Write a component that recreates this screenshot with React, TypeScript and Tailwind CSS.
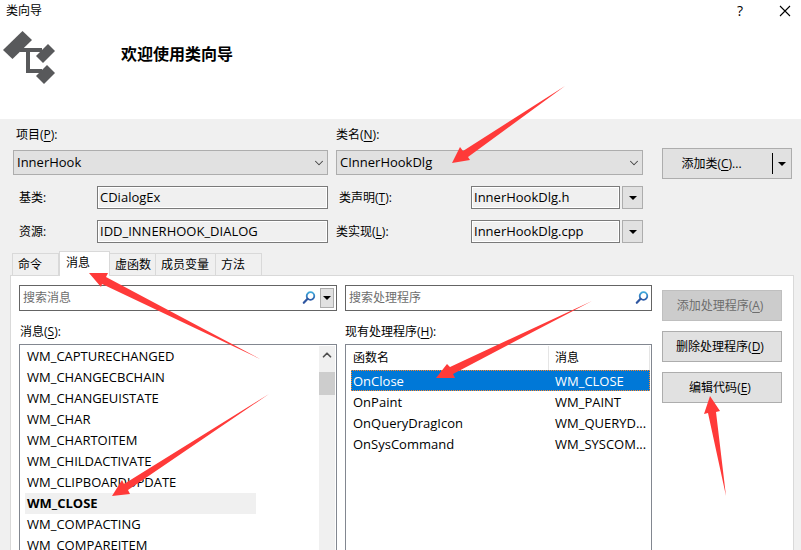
import React from "react";
import clsx from "clsx";
import { ChevronDown, ChevronUp } from "lucide-react";

const messages = [
    "WM_CAPTURECHANGED",
    "WM_CHANGECBCHAIN",
    "WM_CHANGEUISTATE",
    "WM_CHAR",
    "WM_CHARTOITEM",
    "WM_CHILDACTIVATE",
    "WM_CLIPBOARDUPDATE",
    "WM_CLOSE",
    "WM_COMPACTING",
    "WM_COMPAREITEM",
];

const handlers = [
    { name: "OnClose", message: "WM_CLOSE" },
    { name: "OnPaint", message: "WM_PAINT" },
    { name: "OnQueryDragIcon", message: "WM_QUERYD..." },
    { name: "OnSysCommand", message: "WM_SYSCOM..." },
];

const tabs = [
    { label: "命令", width: "w-[47px]" },
    { label: "消息", width: "w-[51px]" },
    { label: "虚函数", width: "w-[46px]" },
    { label: "成员变量", width: "w-[60px]" },
    { label: "方法", width: "w-[46px]" },
];

const marks = [
    "452,163 460,147 463,151 565,86 468,157 470,160",
    "89,273 108,273 106,277 260,359 102,284 101,287",
    "112,496 122,480 124,484 269,394 128,490 130,494",
    "436,378 447,364 450,367 592,301 453,374 455,378",
    "710,396 720,411 716,412 726,496 708,413 704,414",
];

// text with an underlined access key, e.g. 项目(P):
const KeyText = ({ text, accessKey, end = "" }: { text: string; accessKey: string; end?: string }) => (
    <>
        {text}(<span className="underline underline-offset-2">{accessKey}</span>){end}
    </>
);

const Triangle = () => (
    <svg width="8" height="4" viewBox="0 0 8 4" aria-hidden="true">
        <path d="M0 0h8L4 4z" fill="#000" />
    </svg>
);

const SearchIcon = ({ id }: { id: string }) => (
    <svg className="shrink-0" width="14" height="14" viewBox="0 0 14 14" fill="none" aria-hidden="true">
        <defs>
            <linearGradient id={id} x1="0" y1="0" x2="0" y2="1">
                <stop offset="0" stopColor="#3fa9dc" />
                <stop offset="1" stopColor="#2b5aa8" />
            </linearGradient>
        </defs>
        <circle cx="8.5" cy="5" r="3.8" stroke={`url(#${id})`} strokeWidth="1.8" />
        <path d="M5.6 7.8L1.8 11.800" stroke="#2f56a0" strokeWidth="2.2" strokeLinecap="round" />
    </svg>
);

const Combo = ({ id, value }: { id: string; value: string }) => (
    <div className="relative">
        <select
            id={id}
            className="block h-[25px] w-full appearance-none border border-[#adadad] bg-[#e1e1e1] px-[3px] pb-[2px] text-[13px]"
        >
            <option>{value}</option>
        </select>
        <ChevronDown
            size={14}
            strokeWidth={1.8}
            className="pointer-events-none absolute right-[2px] top-[6px] text-[#444]"
        />
    </div>
);

const ReadOnly = ({ id, value }: { id: string; value: string }) => (
    <input
        id={id}
        readOnly
        value={value}
        className="h-[23px] w-full min-w-0 flex-1 border border-[#7a7a7a] bg-[#f0f0f0] px-[2px] pb-[2px] text-[13px] outline outline-1 -outline-offset-2 outline-white"
    />
);

const DropButton = ({ label }: { label: string }) => (
    <button
        aria-label={label}
        className="flex h-[23px] w-[21px] shrink-0 items-center justify-center border border-[#adadad] bg-[#e1e1e1]"
    >
        <Triangle />
    </button>
);

const App = () => {
    return (
        <div className="relative flex h-screen flex-col overflow-hidden bg-[#f0f0f0] font-['Open_Sans','Noto_Sans_CJK_SC',sans-serif] text-xs leading-4 text-black">
            {/* title bar and banner */}
            <header className="h-[119px] shrink-0 bg-white">
                <div className="flex h-[22px] items-center justify-between pl-[6px] pr-[10px]">
                    <span>类向导</span>
                    <div className="flex items-center gap-[31px]">
                        <button aria-label="帮助" className="w-4 text-sm font-medium leading-4">
                            ?
                        </button>
                        <button aria-label="关闭">
                            <svg width="12" height="12" viewBox="0 0 12 12" stroke="#000" strokeWidth="1.1">
                                <path d="M1 1l10 10M11 1L1 11" />
                            </svg>
                        </button>
                    </div>
                </div>
                <div className="flex items-start gap-16 pl-[3px] pt-2">
                    <svg width="54" height="56" viewBox="3 30 54 56" fill="#58595b" aria-hidden="true">
                        <path d="M3 50L22.500 31 32 40 12.500 59z" />
                        <path d="M48 44l7 7-12 12-7-7z" />
                        <path d="M47 65l8 8-11 11-8-8z" />
                        <path d="M20 48h22v4H30v17h12v4H26V52h-6z" />
                    </svg>
                    <h1 className="pt-3 text-base font-bold leading-6">欢迎使用类向导</h1>
                </div>
            </header>

            {/* class fields */}
            <section className="flex shrink-0 gap-[19px] pl-[13px] pr-[9px] pt-[7px]">
                <div className="grid flex-1 grid-cols-[315fr_307fr] gap-x-2">
                    <div>
                        <label htmlFor="project" className="block h-6 pl-[3px] leading-[18px]">
                            <KeyText text="项目" accessKey="P" end=":" />
                        </label>
                        <Combo id="project" value="InnerHook" />
                        <div className="mt-[11px] flex items-center">
                            <label htmlFor="base" className="w-[84px] pl-[6px]">
                                基类:
                            </label>
                            <ReadOnly id="base" value="CDialogEx" />
                        </div>
                        <div className="mt-[11px] flex items-center">
                            <label htmlFor="resource" className="w-[84px] pl-[6px]">
                                资源:
                            </label>
                            <ReadOnly id="resource" value="IDD_INNERHOOK_DIALOG" />
                        </div>
                    </div>
                    <div>
                        <label htmlFor="class-name" className="block h-6 leading-[18px]">
                            <KeyText text="类名" accessKey="N" end=":" />
                        </label>
                        <Combo id="class-name" value="CInnerHookDlg" />
                        <div className="mt-[11px] flex items-center">
                            <label htmlFor="decl" className="w-[135px] pl-[3px]">
                                <KeyText text="类声明" accessKey="T" end=":" />
                            </label>
                            <ReadOnly id="decl" value="InnerHookDlg.h" />
                            <div className="w-[2px]" />
                            <DropButton label="打开类声明" />
                        </div>
                        <div className="mt-[11px] flex items-center">
                            <label htmlFor="impl" className="w-[135px]">
                                <KeyText text="类实现" accessKey="L" end=":" />
                            </label>
                            <ReadOnly id="impl" value="InnerHookDlg.cpp" />
                            <div className="w-[2px]" />
                            <DropButton label="打开类实现" />
                        </div>
                    </div>
                </div>
                <div className="mt-[22px] flex h-[31px] w-[130px] shrink-0 items-center border border-[#adadad] bg-[#e1e1e1]">
                    <button className="h-full flex-1 pr-3">
                        <KeyText text="添加类" accessKey="C" end="..." />
                    </button>
                    <button
                        aria-label="更多添加选项"
                        className="flex h-[21px] w-[19px] items-center justify-center border-l border-black"
                    >
                        <Triangle />
                    </button>
                </div>
            </section>

            {/* tabs */}
            <div role="tablist" className="mt-2 flex h-6 shrink-0 items-end pl-3">
                {tabs.map((tab, i) => (
                    <button
                        key={tab.label}
                        role="tab"
                        aria-selected={i === 1}
                        className={clsx(
                            "whitespace-nowrap border border-b-0 border-[#d9d9d9] text-left",
                            tab.width,
                            i === 1 ? "relative z-10 -mb-px h-[25px] bg-white pb-[2px] pl-[6px]" : "h-[22px] pl-[5px]",
                            i > 1 && "border-l-0"
                        )}
                    >
                        {tab.label}
                    </button>
                ))}
            </div>

            {/* messages page */}
            <main className="ml-[10px] mr-[7px] flex min-h-0 flex-1 gap-[10px] border border-b-0 border-[#d9d9d9] bg-white pl-2 pr-[11px] pt-[9px]">
                <div className="grid min-h-0 flex-1 grid-cols-[318fr_307fr] gap-x-2">
                    <div className="flex min-h-0 flex-col">
                        <div className="flex h-[26px] shrink-0 items-center gap-1 border border-[#646464] pl-[3px] pr-[2px]">
                            <input
                                aria-label="搜索消息"
                                placeholder="搜索消息"
                                className="min-w-0 flex-1 outline-none placeholder:text-[#6d6d6d]"
                            />
                            <SearchIcon id="lens-messages" />
                            <button
                                aria-label="搜索选项"
                                className="flex h-5 w-[14px] items-center justify-center border border-[#adadad] bg-[#e1e1e1]"
                            >
                                <Triangle />
                            </button>
                        </div>
                        <h2 id="messages-label" className="mt-3 h-[21px] shrink-0 pl-px leading-[18px]">
                            <KeyText text="消息" accessKey="S" end=":" />
                        </h2>
                        <div className="flex min-h-0 flex-1 justify-between border border-b-0 border-[#828790] pl-[5px] pr-px pt-px">
                            <ul role="listbox" aria-labelledby="messages-label" className="w-[231px]">
                                {messages.map((name) => (
                                    <li
                                        key={name}
                                        role="option"
                                        aria-selected={name === "WM_CLOSE"}
                                        className={clsx(
                                            "h-[21px] pl-[2px] text-[13px] leading-[21px]",
                                            name === "WM_CLOSE" && "bg-[#f0f0f0] font-bold"
                                        )}
                                    >
                                        {name}
                                    </li>
                                ))}
                            </ul>
                            <div className="w-4 bg-[#f0f0f0]">
                                <div className="flex h-[26px] justify-center pt-[2px] text-[#505050]">
                                    <ChevronUp size={14} strokeWidth={3} />
                                </div>
                                <div className="h-[23px] bg-[#cdcdcd]" />
                            </div>
                        </div>
                    </div>

                    <div className="flex min-h-0 flex-col">
                        <div className="flex h-[26px] shrink-0 items-center border border-[#646464] pl-[3px] pr-[2px]">
                            <input
                                aria-label="搜索处理程序"
                                placeholder="搜索处理程序"
                                className="min-w-0 flex-1 outline-none placeholder:text-[#6d6d6d]"
                            />
                            <SearchIcon id="lens-handlers" />
                        </div>
                        <h2 id="handlers-label" className="mt-3 h-[21px] shrink-0 leading-[18px]">
                            <KeyText text="现有处理程序" accessKey="H" end=":" />
                        </h2>
                        <div className="min-h-0 flex-1 border border-b-0 border-[#828790] pl-[5px] pr-px pt-px">
                            <table aria-labelledby="handlers-label" className="w-full table-fixed border-separate border-spacing-0">
                                <thead>
                                    <tr className="h-6 text-left">
                                        <th className="w-[198px] border-r border-[#e5e5e5] p-0 pl-[2px] font-normal">
                                            函数名
                                        </th>
                                        <th className="border-r border-[#e5e5e5] p-0 pl-[6px] font-normal">消息</th>
                                    </tr>
                                </thead>
                                <tbody>
                                    {handlers.map((h, i) => (
                                        <tr
                                            key={h.name}
                                            className={clsx(
                                                "h-[21px] text-[13px]",
                                                i === 0 &&
                                                    "bg-[#0078d7] text-white outline-1 -outline-offset-1 outline-dotted outline-[#ff8728]"
                                            )}
                                        >
                                            <td className="p-0 pl-[2px]">{h.name}</td>
                                            <td className="whitespace-nowrap p-0 pl-[6px]">{h.message}</td>
                                        </tr>
                                    ))}
                                </tbody>
                            </table>
                        </div>
                    </div>
                </div>

                <div className="flex w-[120px] shrink-0 flex-col gap-[10px] pt-[5px]">
                    <button disabled className="h-[31px] border border-[#bfbfbf] bg-[#cccccc] pr-1 text-[#6d6d6d]">
                        <KeyText text="添加处理程序" accessKey="A" />
                    </button>
                    <button className="h-[31px] border border-[#adadad] bg-[#e1e1e1] pr-1">
                        <KeyText text="删除处理程序" accessKey="D" />
                    </button>
                    <button className="h-[31px] border border-[#adadad] bg-[#e1e1e1] pr-1">
                        <KeyText text="编辑代码" accessKey="E" />
                    </button>
                </div>
            </main>

            {/* red pointers drawn over the dialog */}
            <svg
                className="pointer-events-none absolute left-0 top-0 z-20"
                width="801"
                height="550"
                viewBox="0 0 801 550"
                fill="#ff3a39"
                aria-hidden="true"
            >
                {marks.map((points) => (
                    <polygon key={points} points={points} />
                ))}
            </svg>
        </div>
    );
};

export default App;
